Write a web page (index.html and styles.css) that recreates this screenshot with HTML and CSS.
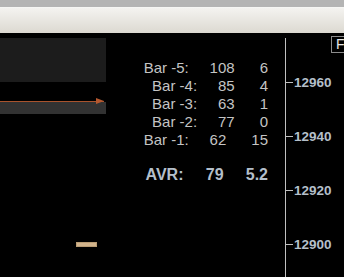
FILE: index.html
```html
<!DOCTYPE html>
<html lang="en">
<head>
    <meta charset="UTF-8">
    <meta name="viewport" content="width=device-width, initial-scale=1.0">
    <title>Chart</title>
    <link rel="stylesheet" href="styles.css">
</head>
<body>
    <div class="titlebar"></div>
    <div class="toolbar"></div>

    <div class="chart">
        <div class="plot">
            <div class="zone zone-upper"></div>
            <div class="trend"></div>
            <div class="zone zone-lower"></div>
            <div class="marker"></div>

            <div class="comment">
                <div class="row">Bar -5:     108      6</div>
                <div class="row">Bar -4:     85      4</div>
                <div class="row">Bar -3:     63      1</div>
                <div class="row">Bar -2:     77      0</div>
                <div class="row">Bar -1:     62      15</div>
                <div class="row avr">AVR:     79     5.2</div>
            </div>
        </div>

        <div class="axis">
            <div class="price">12960</div>
            <div class="price">12940</div>
            <div class="price">12920</div>
            <div class="price">12900</div>
        </div>

        <div class="corner-btn">F</div>
    </div>
</body>
</html>
```

FILE: styles.css
```css
:root {
    --chart-bg: #000000;
    --text-silver: #c4c4c4;
    --text-steel: #b4bfca;
    --axis-line: #c0c0c0;
    --trend: #a9532d;
}

* {
    margin: 0;
    padding: 0;
    box-sizing: border-box;
}

body {
    font-family: 'Liberation Sans', Arial, sans-serif;
    background: var(--chart-bg);
    width: 344px;
    height: 277px;
    overflow: hidden;
}

.titlebar {
    height: 7px;
    background: #b4b4b4;
}

.toolbar {
    height: 26px;
    background: linear-gradient(#f4f3f0, #dcd9d1);
    border-top: 1px solid #f6f6f4;
}

.chart {
    position: relative;
    display: flex;
    height: 244px;
}

.plot {
    position: relative;
    width: 285px;
    height: 100%;
}

/* objects drawn on the chart canvas */
.zone {
    position: absolute;
    left: 0;
    width: 106px;
}

.zone-upper {
    top: 5px;
    height: 44px;
    background: #1c1c1c;
}

.zone-lower {
    top: 69px;
    height: 12px;
    background: #323232;
}

.trend {
    position: absolute;
    left: 0;
    top: 68px;
    width: 104px;
    height: 1px;
    background: var(--trend);
    z-index: 2;
}

.trend::after {
    content: '';
    position: absolute;
    left: 96px;
    top: -3px;
    border-left: 8px solid #b5582f;
    border-top: 3.5px solid transparent;
    border-bottom: 3.5px solid transparent;
}

.marker {
    position: absolute;
    left: 76px;
    top: 209px;
    width: 21px;
    height: 5px;
    background: #d2b48c;
    border: 1px solid #b99c74;
}

.comment {
    position: absolute;
    top: 26px;
    right: 17px;
    text-align: right;
}

.row {
    white-space: pre;
    font-size: 15px;
    line-height: 18px;
    color: var(--text-silver);
}

.row.avr {
    margin-top: 17px;
    font-size: 16px;
    font-weight: 700;
    color: var(--text-steel);
}

/* price scale */
.axis {
    flex: 1;
    margin-top: 5px;
    border-left: 1px solid var(--axis-line);
    padding-top: 35px;
    display: flex;
    flex-direction: column;
    gap: 36px;
}

.price {
    display: flex;
    align-items: center;
    height: 18px;
    font-size: 13.5px;
    font-weight: 700;
    color: var(--text-steel);
}

.price::before {
    content: '';
    width: 7px;
    height: 1px;
    margin-right: 1px;
    background: var(--axis-line);
}

.corner-btn {
    position: absolute;
    top: 3px;
    right: -4px;
    width: 17px;
    height: 17px;
    border: 1px solid #8c8c8c;
    background: #000;
    color: #e6e6e6;
    font-size: 14px;
    line-height: 15px;
    padding-left: 4px;
}
```
